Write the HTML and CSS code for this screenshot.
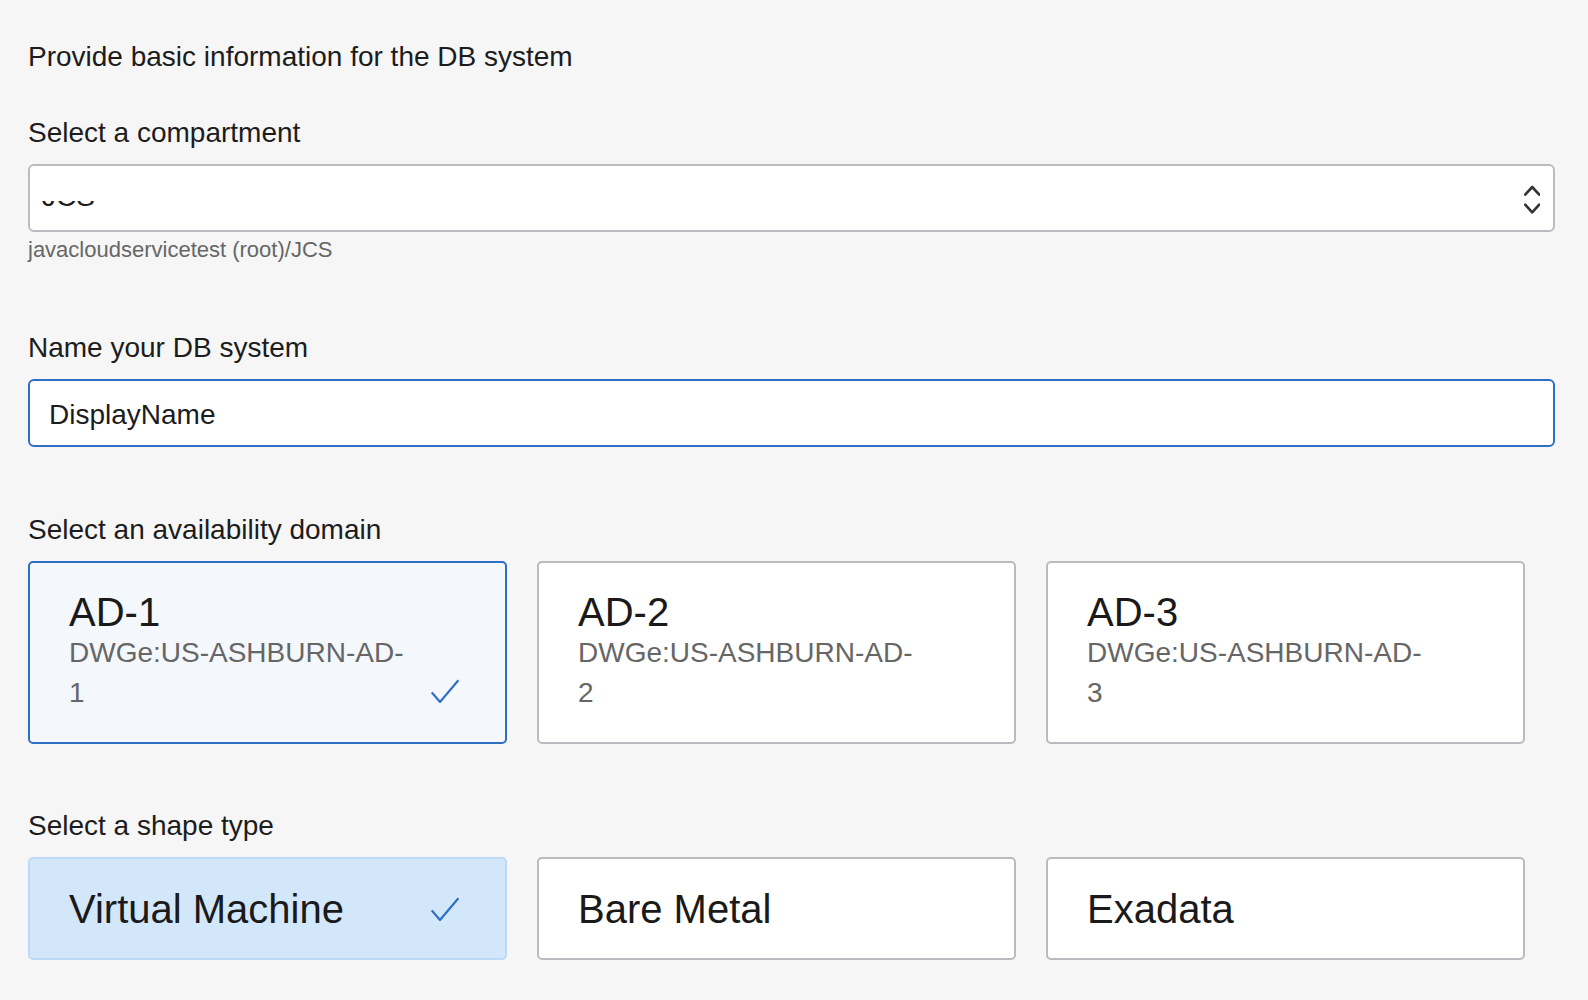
FILE: index.html
```html
<!DOCTYPE html>
<html lang="en">
<head>
<meta charset="utf-8">
<title>Create DB System</title>
<link rel="stylesheet" href="styles.css">
</head>
<body>
<main class="page">
  <h2 class="intro">Provide basic information for the DB system</h2>

  <section class="field field-compartment">
    <div class="label">Select a compartment</div>
    <div class="select">
      <span class="select-value">JCS</span>
      <svg class="chevrons" width="16" height="30" viewBox="0 0 16 30" aria-hidden="true">
        <polyline points="1.2,9.6 8.2,2 15.2,9.6" />
        <polyline points="1.2,19.6 8.2,27.4 15.2,19.6" />
      </svg>
    </div>
    <div class="helper">javacloudservicetest (root)/JCS</div>
  </section>

  <section class="field field-name">
    <div class="label">Name your DB system</div>
    <input class="text-input" type="text" value="DisplayName">
  </section>

  <section class="field field-ad">
    <div class="label">Select an availability domain</div>
    <div class="tiles">
      <div class="ad-card selected">
        <div class="ad-title">AD-1</div>
        <div class="ad-desc">DWGe:US-ASHBURN-AD-<br>1</div>
        <svg class="check ad-check" width="28" height="24" viewBox="0 0 28 24" aria-hidden="true">
          <polyline points="0.8,13.4 9,23 27.4,1.2" />
        </svg>
      </div>
      <div class="ad-card">
        <div class="ad-title">AD-2</div>
        <div class="ad-desc">DWGe:US-ASHBURN-AD-<br>2</div>
      </div>
      <div class="ad-card">
        <div class="ad-title">AD-3</div>
        <div class="ad-desc">DWGe:US-ASHBURN-AD-<br>3</div>
      </div>
    </div>
  </section>

  <section class="field field-shape">
    <div class="label">Select a shape type</div>
    <div class="tiles">
      <div class="shape-card selected">
        <span class="shape-name">Virtual Machine</span>
        <svg class="check" width="28" height="24" viewBox="0 0 28 24" aria-hidden="true">
          <polyline points="0.8,13.4 9,23 27.4,1.2" />
        </svg>
      </div>
      <div class="shape-card">
        <span class="shape-name">Bare Metal</span>
      </div>
      <div class="shape-card">
        <span class="shape-name">Exadata</span>
      </div>
    </div>
  </section>
</main>
</body>
</html>
```

FILE: styles.css
```css
html, body {
  margin: 0;
  padding: 0;
  background: #f6f6f6;
}

body {
  font-family: "Liberation Sans", Arial, Helvetica, sans-serif;
  color: #1c1c1c;
}

.page {
  padding: 40px 33px 0 28px;
}

.intro {
  margin: 0 0 42px;
  font-size: 28px;
  line-height: 34px;
  font-weight: normal;
  color: #1c1c1c;
}

.label {
  font-size: 28px;
  line-height: 34px;
  margin-bottom: 14px;
  color: #1c1c1c;
}

.field-compartment { margin-bottom: 68px; }
.field-name { margin-bottom: 66px; }
.field-ad { margin-bottom: 65px; }

/* select */
.select {
  box-sizing: border-box;
  height: 68px;
  background: #fff;
  border: 2px solid #b9bcc1;
  border-radius: 6px;
  display: flex;
  align-items: flex-start;
  padding: 0 13px 0 12px;
}

.select-value {
  font-size: 28px;
  line-height: 28px;
  margin-top: 17px;
  color: #1c1c1c;
  clip-path: inset(18px 0 0 0);
}

.chevrons {
  margin-left: auto;
  margin-top: 19px;
  fill: none;
  stroke: #333;
  stroke-width: 2.6;
  stroke-linecap: round;
  stroke-linejoin: round;
}

.helper {
  margin-top: 5px;
  font-size: 22px;
  line-height: 26px;
  color: #666;
}

/* text input */
.text-input {
  display: block;
  box-sizing: border-box;
  width: 100%;
  height: 68px;
  margin: 0;
  padding: 4px 19px 0;
  background: #fff;
  border: 2px solid #2d6fc3;
  border-radius: 6px;
  font-family: "Liberation Sans", Arial, Helvetica, sans-serif;
  font-size: 28px;
  color: #1c1c1c;
  outline: none;
}

/* tiles */
.tiles {
  display: grid;
  grid-template-columns: repeat(3, 478.5px);
  column-gap: 30.5px;
}

.ad-card {
  position: relative;
  box-sizing: border-box;
  height: 183px;
  padding: 28px 39px 0;
  background: #fff;
  border: 2px solid #b8bbc0;
  border-radius: 5px;
}

.ad-card.selected {
  background: #f4f8fd;
  border-color: #2d6fc3;
}

.ad-title {
  font-size: 40px;
  line-height: 42px;
  color: #1a1a1a;
}

.ad-desc {
  font-size: 28px;
  line-height: 40px;
  color: #666;
}

.check {
  fill: none;
  stroke: #2f70c6;
  stroke-width: 2.2;
  stroke-linejoin: miter;
}

.ad-check {
  position: absolute;
  right: 46px;
  top: 116px;
}

.shape-card {
  box-sizing: border-box;
  height: 103px;
  padding: 0 46px 0 39px;
  display: flex;
  align-items: center;
  justify-content: space-between;
  background: #fff;
  border: 2px solid #b8bbc0;
  border-radius: 5px;
}

.shape-card.selected {
  background: #d3e7fb;
  border-color: #bcdaf7;
}

.shape-name {
  font-size: 40px;
  line-height: 42px;
  color: #1a1a1a;
}
```
